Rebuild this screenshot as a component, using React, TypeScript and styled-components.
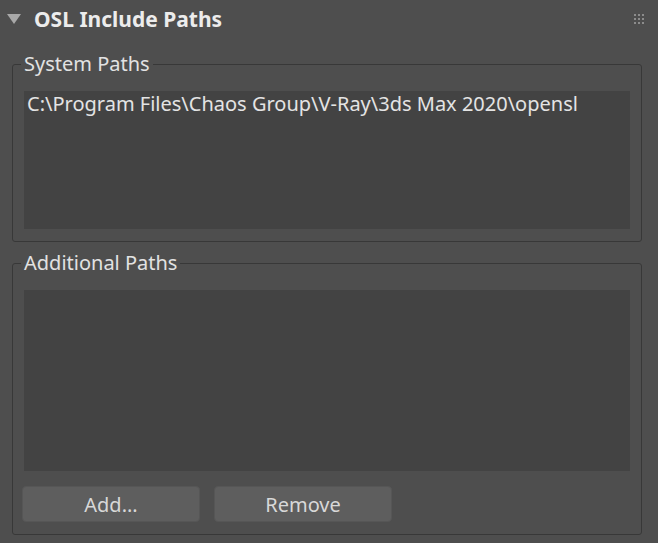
import styled, { createGlobalStyle } from "styled-components";

const GlobalStyle = createGlobalStyle`
  html, body {
    margin: 0;
    padding: 0;
    background: #4e4e4e;
  }
  body {
    font-family: "Noto Sans", "Open Sans", sans-serif;
    color: #dedede;
  }
`;

const Panel = styled.div`
  width: 658px;
  height: 543px;
  box-sizing: border-box;
  background: #4e4e4e;
  overflow: hidden;
`;

const Header = styled.div`
  display: flex;
  align-items: center;
  height: 38px;
  padding: 0 14px 0 7px;
`;

const Arrow = styled.div`
  width: 0;
  height: 0;
  border-left: 7px solid transparent;
  border-right: 7px solid transparent;
  border-top: 10px solid #a8a8a8;
  margin-right: 13px;
`;

const Title = styled.div`
  flex: 1;
  font-size: 21px;
  line-height: 24px;
  font-weight: 700;
  color: #ececec;
`;

const Grip = styled.div`
  display: grid;
  grid-template-columns: repeat(3, 2px);
  grid-auto-rows: 2px;
  gap: 2px;
  span {
    background: #8c8c8c;
  }
`;

const Body = styled.div`
  padding: 15px 16px 0 12px;
  display: flex;
  flex-direction: column;
  gap: 10px;
`;

const Group = styled.fieldset`
  margin: 0;
  padding: 16px 11px 12px 11px;
  border: 1px solid #383838;
  border-radius: 3px;
  min-width: 0;
`;

const Legend = styled.legend`
  padding: 0 3px;
  margin-left: -3px;
  font-size: 20px;
  line-height: 22px;
  color: #e2e2e2;
`;

const ListBox = styled.div<{ $height: number }>`
  box-sizing: border-box;
  height: ${(p) => p.$height}px;
  background: #434343;
  padding: 0 3px;
  font-size: 20px;
  line-height: 26px;
  color: #e4e4e4;
  white-space: nowrap;
`;

const ButtonRow = styled.div`
  display: flex;
  gap: 14px;
  margin: 15px 0 0 -2px;
`;

const Button = styled.button`
  width: 178px;
  height: 36px;
  background: #5e5e5e;
  border: 1px solid #565656;
  border-radius: 4px;
  font-family: "Noto Sans", "Open Sans", sans-serif;
  font-size: 20px;
  color: #d8d8d8;
  padding: 0;
`;

export default function App() {
  return (
    <Panel>
      <GlobalStyle />
      <Header>
        <Arrow />
        <Title>OSL Include Paths</Title>
        <Grip>
          {Array.from({ length: 9 }).map((_, i) => (
            <span key={i} />
          ))}
        </Grip>
      </Header>
      <Body>
        <Group>
          <Legend>System Paths</Legend>
          <ListBox $height={138}>
            C:\Program Files\Chaos Group\V-Ray\3ds Max 2020\opensl
          </ListBox>
        </Group>
        <Group>
          <Legend>Additional Paths</Legend>
          <ListBox $height={181} />
          <ButtonRow>
            <Button>Add...</Button>
            <Button>Remove</Button>
          </ButtonRow>
        </Group>
      </Body>
    </Panel>
  );
}
